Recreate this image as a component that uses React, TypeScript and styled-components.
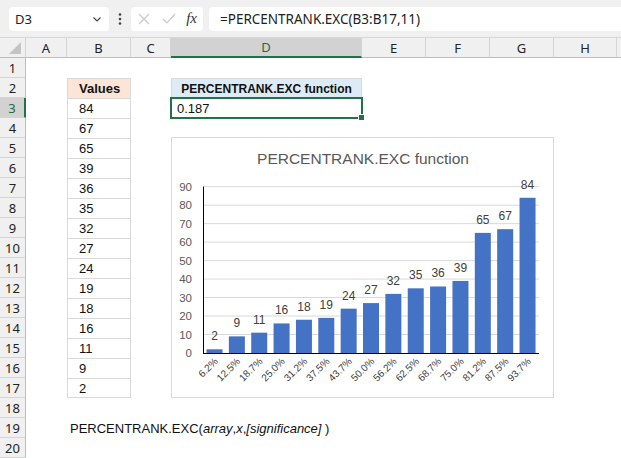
import React from 'react';
import styled, { createGlobalStyle, css } from 'styled-components';

const Global = createGlobalStyle`
  html, body { margin: 0; padding: 0; background: #fff; }
  body { font-family: "Liberation Sans", Arial, sans-serif; overflow: hidden; }
`;

const UI_FONT = `"Noto Sans", "Open Sans", sans-serif`;
const CELL_FONT = `"Liberation Sans", Arial, sans-serif`;

const Page = styled.div`
  width: 621px;
  height: 458px;
  overflow: hidden;
  background: #fff;
`;

const Toolbar = styled.div`
  height: 37px;
  background: #f0f0f0;
  border-bottom: 1px solid #d6d6d6;
  display: flex;
  align-items: center;
  padding-left: 9px;
  font-family: ${UI_FONT};
`;

const NameBox = styled.div`
  width: 100px;
  height: 24px;
  box-sizing: border-box;
  background: #fff;
  border-radius: 4px;
  display: flex;
  align-items: center;
  justify-content: space-between;
  padding: 0 6px 0 6px;
  font-size: 13px;
  color: #222;
`;

const Dots = styled.div`
  width: 22px;
  display: flex;
  justify-content: center;
`;

const FxBox = styled.div`
  width: 72px;
  height: 24px;
  box-sizing: border-box;
  background: #fff;
  border-radius: 4px;
  display: flex;
  align-items: center;
  justify-content: space-between;
  padding: 0 6px 0 6px;
`;

const FormulaInput = styled.div`
  flex: 1;
  margin-left: 6px;
  height: 24px;
  background: #fff;
  border-radius: 4px 0 0 4px;
  display: flex;
  align-items: center;
  padding-left: 11px;
  font-size: 13.5px;
  color: #222;
  white-space: nowrap;
`;

const COLS = [26, 41, 64, 40, 191, 64, 64, 64, 63, 30];
const LETTERS = ['A', 'B', 'C', 'D', 'E', 'F', 'G', 'H', ''];

const Sheet = styled.div`
  position: relative;
  display: grid;
  grid-template-columns: ${COLS.map((c) => c + 'px').join(' ')};
  grid-template-rows: 20px repeat(20, 20px);
  font-family: ${CELL_FONT};
`;

const Corner = styled.div`
  background: #f0f0f0;
  border-right: 1px solid #d4d4d4;
  border-bottom: 1px solid #bdbdbd;
  box-sizing: border-box;
  position: relative;
  overflow: hidden;
`;

const ColHead = styled.div<{ $active?: boolean }>`
  box-sizing: border-box;
  background: #f0f0f0;
  border-right: 1px solid #d4d4d4;
  border-bottom: 1px solid #bdbdbd;
  display: flex;
  align-items: center;
  justify-content: center;
  font-family: ${UI_FONT};
  font-size: 13px;
  color: #222;
  ${(p) =>
    p.$active &&
    css`
      background: #d2d2d2;
      color: #1e6b3f;
      border-bottom: 2px solid #217346;
    `}
`;

const RowHead = styled.div<{ $active?: boolean }>`
  box-sizing: border-box;
  background: #f0f0f0;
  border-right: 1px solid #bdbdbd;
  border-bottom: 1px solid #d4d4d4;
  display: flex;
  align-items: center;
  justify-content: center;
  font-family: ${UI_FONT};
  font-size: 13px;
  color: #222;
  ${(p) =>
    p.$active &&
    css`
      background: #d2d2d2;
      color: #1e6b3f;
      border-right: 2px solid #217346;
    `}
`;

const Cell = styled.div<{ $kind?: 'values' | 'fn' | 'data' | 'sel' | 'plain' }>`
  box-sizing: border-box;
  display: flex;
  align-items: center;
  font-size: 13px;
  color: #111;
  white-space: nowrap;
  position: relative;
  padding-left: 5px;
  ${(p) =>
    p.$kind === 'values' &&
    css`
      background: #fce4d6;
      border: 1px solid #d9d9d9;
      border-bottom: none;
      font-weight: bold;
      padding-left: 11px;
    `}
  ${(p) =>
    p.$kind === 'data' &&
    css`
      border: 1px solid #d9d9d9;
      border-bottom: none;
      padding-left: 11px;
    `}
  ${(p) =>
    p.$kind === 'fn' &&
    css`
      background: #ddebf7;
      border: 1px solid #d9d9d9;
      border-bottom: none;
      font-weight: bold;
      font-size: 12px;
      justify-content: center;
      padding-left: 0;
    `}
  ${(p) =>
    p.$kind === 'sel' &&
    css`
      border: 2px solid #217346;
      margin: -1px;
      padding-left: 5px;
    `}
`;

const LastData = styled(Cell)`
  border-bottom: 1px solid #d9d9d9;
`;

const FillHandle = styled.span`
  position: absolute;
  right: -4px;
  bottom: -4px;
  width: 5px;
  height: 5px;
  background: #217346;
  border: 1px solid #fff;
`;

const Italic = styled.span`
  font-style: italic;
`;

const ChartBox = styled.div`
  position: absolute;
  left: 171px;
  top: 99px;
  width: 383px;
  height: 261px;
  box-sizing: border-box;
  border: 1px solid #d9d9d9;
  background: #fff;
`;

const values = [84, 67, 65, 39, 36, 35, 32, 27, 24, 19, 18, 16, 11, 9, 2];
const chartVals = [2, 9, 11, 16, 18, 19, 24, 27, 32, 35, 36, 39, 65, 67, 84];
const chartCats = ['6.2%', '12.5%', '18.7%', '25.0%', '31.2%', '37.5%', '43.7%', '50.0%', '56.2%', '62.5%', '68.7%', '75.0%', '81.2%', '87.5%', '93.7%'];

const Chart: React.FC = () => {
  const x0 = 31;
  const x1 = 367;
  const base = 215;
  const k = 1.848;
  const pitch = 22.36;
  return (
    <svg width="381" height="259" style={{ display: 'block' }} fontFamily={CELL_FONT}>
      <text x="191" y="26" textAnchor="middle" fontSize="15.5" fill="#595959">
        PERCENTRANK.EXC function
      </text>
      {Array.from({ length: 10 }, (_, i) => {
        const y = base - i * 10 * k;
        return (
          <g key={i}>
            {i > 0 && <line x1={x0} x2={x1} y1={y} y2={y} stroke="#d9d9d9" strokeWidth="1" />}
            <text x="20" y={y + 4} textAnchor="end" fontSize="11.5" fill="#595959">
              {i * 10}
            </text>
          </g>
        );
      })}
      {chartVals.map((v, i) => {
        const bx = 34.5 + i * pitch;
        const h = v * k;
        const cx = bx + 8;
        return (
          <g key={i}>
            <rect x={bx} y={base - h} width="16" height={h} fill="#4472c4" />
            <text x={cx} y={base - h - 9} textAnchor="middle" fontSize="12" fill="#404040">
              {v}
            </text>
            <text
              x={cx + 4}
              y={base + 9}
              textAnchor="end"
              fontSize="10"
              fill="#404040"
              transform={`rotate(-45 ${cx + 4} ${base + 9})`}
            >
              {chartCats[i]}
            </text>
          </g>
        );
      })}
      <line x1={x0} x2={x1} y1={base + 0.5} y2={base + 0.5} stroke="#000" strokeWidth="1" />
      <line x1={x0 + 0.5} x2={x0 + 0.5} y1={base - 90 * k} y2={base} stroke="#000" strokeWidth="1" />
    </svg>
  );
};

const ChevronDown = () => (
  <svg width="12" height="12" viewBox="0 0 12 12">
    <path d="M2.5 4.5 L6 8 L9.5 4.5" fill="none" stroke="#444" strokeWidth="1.2" />
  </svg>
);

const VDots = () => (
  <svg width="4" height="14" viewBox="0 0 4 14">
    <circle cx="2" cy="2.5" r="1.3" fill="#444" />
    <circle cx="2" cy="7" r="1.3" fill="#444" />
    <circle cx="2" cy="11.5" r="1.3" fill="#444" />
  </svg>
);

const FxIcons = () => (
  <>
    <svg width="14" height="14" viewBox="0 0 14 14">
      <path d="M2 2 L12 12 M12 2 L2 12" stroke="#c8c8c8" strokeWidth="1.2" />
    </svg>
    <svg width="16" height="14" viewBox="0 0 16 14">
      <path d="M2 7 L6 11 L14 2" stroke="#c8c8c8" strokeWidth="1.2" fill="none" />
    </svg>
    <span style={{ fontFamily: '"Liberation Serif", serif', fontStyle: 'italic', fontSize: 15, color: '#333' }}>fx</span>
  </>
);

const cellContent = (row: number, col: number): React.ReactNode => {
  // col: 1=A ... 9=I
  if (col === 2 && row === 2) return <Cell $kind="values">Values</Cell>;
  if (col === 2 && row >= 3 && row <= 16) return <Cell $kind="data">{values[row - 3]}</Cell>;
  if (col === 2 && row === 17) return <LastData $kind="data">{values[14]}</LastData>;
  if (col === 4 && row === 2) return <Cell $kind="fn">PERCENTRANK.EXC function</Cell>;
  if (col === 4 && row === 3)
    return (
      <Cell $kind="sel">
        0.187
        <FillHandle />
      </Cell>
    );
  if (col === 2 && row === 19)
    return (
      <Cell style={{ paddingLeft: 3 }}>
        PERCENTRANK.EXC(<Italic>array</Italic>,<Italic>x</Italic>,<Italic>[significance]</Italic>&nbsp;)
      </Cell>
    );
  return <Cell />;
};

const App: React.FC = () => {
  const rows = Array.from({ length: 20 }, (_, i) => i + 1);
  return (
    <Page>
      <Global />
      <Toolbar>
        <NameBox>
          <span>D3</span>
          <ChevronDown />
        </NameBox>
        <Dots>
          <VDots />
        </Dots>
        <FxBox>
          <FxIcons />
        </FxBox>
        <FormulaInput>=PERCENTRANK.EXC(B3:B17,11)</FormulaInput>
      </Toolbar>
      <Sheet>
        <Corner>
          <svg width="26" height="20" style={{ position: 'absolute', left: 0, top: 0 }}>
            <path d="M9 16 L21 16 L21 4 Z" fill="#c4c4c4" />
          </svg>
        </Corner>
        {LETTERS.map((l, i) => (
          <ColHead key={i} $active={l === 'D'}>
            {l}
          </ColHead>
        ))}
        {rows.map((r) => (
          <React.Fragment key={r}>
            <RowHead $active={r === 3}>{r}</RowHead>
            {LETTERS.map((_, c) => (
              <React.Fragment key={c}>{cellContent(r, c + 1)}</React.Fragment>
            ))}
          </React.Fragment>
        ))}
        <ChartBox>
          <Chart />
        </ChartBox>
      </Sheet>
    </Page>
  );
};

export default App;
